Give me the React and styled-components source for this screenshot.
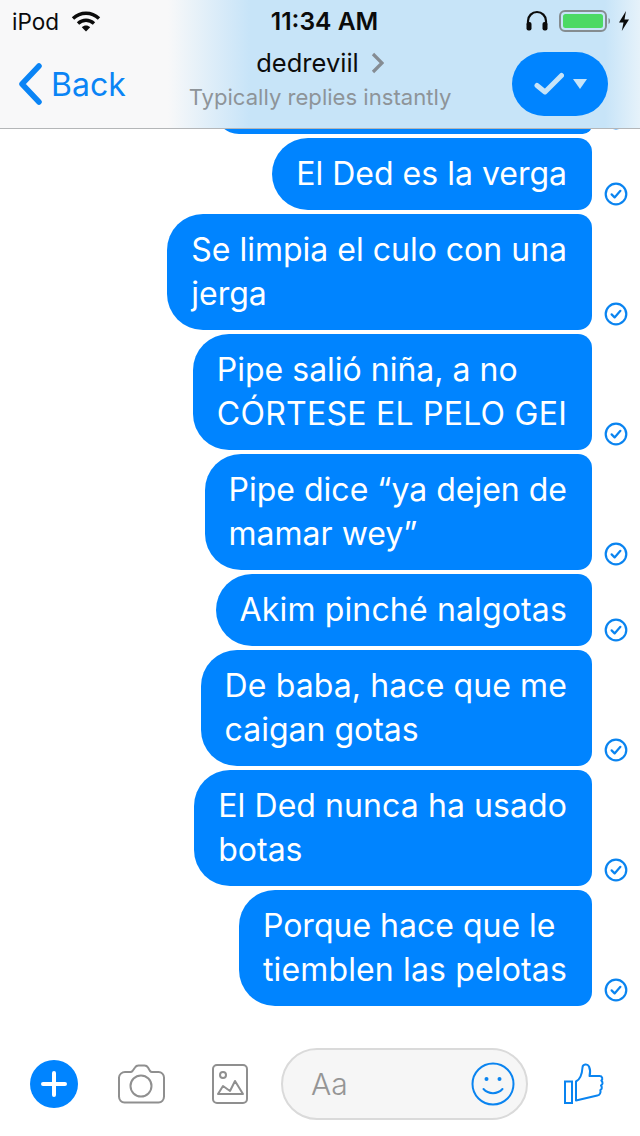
import React from 'react';
import styled, { createGlobalStyle } from 'styled-components';

const Global = createGlobalStyle`
  html, body { margin: 0; padding: 0; background: #fff; }
  body { font-family: Inter, "Noto Sans", "Liberation Sans", sans-serif; }
  * { box-sizing: border-box; }
`;
const Screen = styled.div`
  width: 640px; height: 1136px; display: flex; flex-direction: column; overflow: hidden; background: #fff;
`;
const Header = styled.header`
  height: 129px; flex: none; border-bottom: 1px solid #b4b6b8;
  background: linear-gradient(90deg, #f8f8f9 0, #f8f8f9 168px, #c7e4f8 250px, #c7e4f8 605px, #e6f2fa 640px);
`;
const StatusBar = styled.div`
  height: 42px; display: grid; grid-template-columns: 1fr auto 1fr; align-items: center; padding: 0 10px 0 12px;
  font-size: 22.5px; color: #0b0b0b;
`;
const StatusLeft = styled.div`display: flex; align-items: center; gap: 12px;`;
const StatusRight = styled.div`display: flex; align-items: center; justify-content: flex-end;`;
const Clock = styled.div`font-weight: 600; font-size: 24.6px; margin-left: 7px;`;
const Nav = styled.div`
  height: 86px; display: grid; grid-template-columns: 1fr auto 1fr; align-items: center; padding: 0 18px 2px 18px;
`;
const Back = styled.div`
  display: flex; align-items: center; gap: 9px; color: #0a84f5; font-size: 32px;
`;
const Title = styled.div`
  display: flex; flex-direction: column; align-items: center; margin-top: -10px;
`;
const Name = styled.div`
  display: flex; align-items: center; gap: 12px; font-size: 25.5px; color: #0c0c0c; line-height: 36px;
`;
const Sub = styled.div`font-size: 22.1px; color: #8e9499; line-height: 32px;`;
const Action = styled.div`
  justify-self: end; margin-right: 14px; width: 96px; height: 64px; border-radius: 32px; background: #0084ff;
  display: flex; align-items: center; justify-content: center; gap: 9px;
`;
const Thread = styled.main`
  flex: 1; display: flex; flex-direction: column; gap: 4px; align-items: flex-end; padding-right: 12px; overflow: hidden;
`;
const Row = styled.div`
  display: flex; align-items: flex-end; gap: 12px; flex: none; ${p => p.$clipped && 'height: 5px; overflow: hidden;'}
`;
const Bubble = styled.div`
  background: #0084ff; color: #fff; font-size: 32px; line-height: 44px; padding: 14px 25px 14px 24px;
  border-radius: 36px 14px 14px 36px; white-space: nowrap;
`;
const Line = styled.div`
  letter-spacing: ${p => p.$track || 0}px;
`;
const ClippedBubble = styled.div`
  background: #0084ff; width: 377px; height: 48px; flex: none; border-radius: 36px 14px 14px 36px;
`;
const Composer = styled.footer`
  height: 88px; flex: none; margin-bottom: 8px; display: flex; align-items: center; padding: 0 36px 0 30px;
`;
const Plus = styled.div`
  width: 48px; height: 48px; border-radius: 50%; background: #0084ff; display: flex; align-items: center; justify-content: center; margin-right: 40px; flex: none;
`;
const ToolIcon = styled.svg`flex: none; display: block; margin-right: ${p => p.$gap}px;`;
const InputPill = styled.div`
  width: 247px; height: 72px; border: 2px solid #dadada; border-radius: 36px; background: #f6f6f6; flex: none;
  display: flex; align-items: center; justify-content: space-between; padding: 0 11px 0 28px; margin-right: 35px;
  color: #959595; font-size: 30px; font-weight: 300;
`;
const Icon = styled.svg`display: block; flex: none;`;
const TickBadge = styled(Icon)`margin-bottom: 4px;`;
const BatteryIcon = styled(Icon)`margin: 0 5px 0 10px;`;

const CheckIcon = () => (
  <TickBadge width="24" height="24" viewBox="0 0 24 24">
    <circle cx="12" cy="12" r="10.3" fill="none" stroke="#0a84f0" strokeWidth="2.200" />
    <path d="M7.600 12.400l3 3 5.800-6.600" fill="none" stroke="#0a84f0" strokeWidth="2.200" strokeLinecap="round" strokeLinejoin="round" />
  </TickBadge>
);

const messages = [
  { lines: [['El Ded es la verga']] },
  { lines: [['Se limpia el culo con una'], ['jerga']] },
  { lines: [['Pipe salió niña, a no'], ['CÓRTESE EL PELO GEI', 0.25]] },
  { lines: [['Pipe dice “ya dejen de'], ['mamar wey”']] },
  { lines: [['Akim pinché nalgotas', 0.15]] },
  { lines: [['De baba, hace que me', 0.1], ['caigan gotas']] },
  { lines: [['El Ded nunca ha usado', 0.08], ['botas']] },
  { lines: [['Porque hace que le'], ['tiemblen las pelotas', 0.15]] },
];

export default function App() {
  return (
    <Screen>
      <Global />
      <Header>
        <StatusBar>
          <StatusLeft>
            <span>iPod</span>
            <Icon width="30" height="22" viewBox="0 0 30 22">
              <path d="M2 8.500C9.500 1.500 20.500 1.500 28 8.500" fill="none" stroke="#0b0b0b" strokeWidth="3.400" />
              <path d="M7 13.500c4.800-4.400 11.200-4.400 16 0" fill="none" stroke="#0b0b0b" strokeWidth="3.400" />
              <path d="M10.800 17.200c2.500-2.300 5.900-2.300 8.400 0L15 21.500z" fill="#0b0b0b" />
            </Icon>
          </StatusLeft>
          <Clock>11:34 AM</Clock>
          <StatusRight>
            <Icon width="24" height="22" viewBox="0 0 24 22">
              <path d="M3 15V11a9 9 0 0 1 18 0v4" fill="none" stroke="#0b0b0b" strokeWidth="2.200" />
              <rect x="1.500" y="12" width="5" height="8.500" rx="2" fill="#0b0b0b" />
              <rect x="17.500" y="12" width="5" height="8.500" rx="2" fill="#0b0b0b" />
            </Icon>
            <BatteryIcon width="54" height="24" viewBox="0 0 54 24">
              <rect x="1" y="2" width="46" height="20" rx="5" fill="none" stroke="#858c90" strokeWidth="2" />
              <rect x="4" y="5" width="40" height="14" rx="2.500" fill="#4cd964" />
              <path d="M49.500 9c2 .5 2 5.500 0 6z" fill="#858c90" />
            </BatteryIcon>
            <Icon width="12" height="22" viewBox="0 0 12 22">
              <path d="M8 1L1 12.500h4.500L3.800 21 11 9.500H6.500z" fill="#0b0b0b" />
            </Icon>
          </StatusRight>
        </StatusBar>
        <Nav>
          <Back>
            <Icon width="24" height="42" viewBox="0 0 24 42">
              <path d="M21 3L4 21l17 18" fill="none" stroke="#0a84f5" strokeWidth="5.500" strokeLinecap="round" strokeLinejoin="round" />
            </Icon>
            <span>Back</span>
          </Back>
          <Title>
            <Name>
              <span>dedreviil</span>
              <Icon width="13" height="22" viewBox="0 0 13 22">
                <path d="M2 2l9 9-9 9" fill="none" stroke="#858c93" strokeWidth="3.200" />
              </Icon>
            </Name>
            <Sub>Typically replies instantly</Sub>
          </Title>
          <Action>
            <Icon width="30" height="24" viewBox="0 0 30 24">
              <path d="M3 13.500l8 6.500L27.500 3.500" fill="none" stroke="#c7e4f8" strokeWidth="5" strokeLinecap="round" strokeLinejoin="round" />
            </Icon>
            <Icon width="14" height="10" viewBox="0 0 14 10">
              <path d="M0 0h14L7 10z" fill="#c7e4f8" />
            </Icon>
          </Action>
        </Nav>
      </Header>
      <Thread>
        <Row $clipped>
          <ClippedBubble />
          <CheckIcon />
        </Row>
        {messages.map((m, i) => (
          <Row key={i}>
            <Bubble>
              {m.lines.map(([text, track], j) => <Line key={j} $track={track}>{text}</Line>)}
            </Bubble>
            <CheckIcon />
          </Row>
        ))}
      </Thread>
      <Composer>
        <Plus>
          <Icon width="26" height="26" viewBox="0 0 26 26">
            <path d="M13 2v22M2 13h22" stroke="#fff" strokeWidth="4" strokeLinecap="round" />
          </Icon>
        </Plus>
        <ToolIcon $gap={47} width="47" height="40" viewBox="0 0 47 40">
          <path d="M7 8h5.500c1 0 1.500-.4 2-1l2.500-3.500c.8-1.300 1.800-2 3.500-2h6c1.700 0 2.700.7 3.500 2L32 7c.5.6 1 1 2 1h6.500C43.500 8 46 10.500 46 13.500v19c0 3.500-2.500 6-5.500 6h-34C3.500 38.500 1 36 1 32.500v-19C1 10.500 4 8 7 8z" fill="none" stroke="#8f8f8f" strokeWidth="2" />
          <circle cx="23" cy="22" r="10.500" fill="none" stroke="#8f8f8f" strokeWidth="2" />
        </ToolIcon>
        <ToolIcon $gap={33} width="36" height="40" viewBox="0 0 36 40">
          <rect x="1" y="1" width="34" height="38" rx="4" fill="none" stroke="#8f8f8f" strokeWidth="2" />
          <circle cx="11" cy="11" r="3" fill="none" stroke="#8f8f8f" strokeWidth="2" />
          <path d="M6 30l5-8 7 5 5-10 8 13z" fill="none" stroke="#8f8f8f" strokeWidth="2" strokeLinejoin="round" />
        </ToolIcon>
        <InputPill>
          <span>Aa</span>
          <Icon width="44" height="44" viewBox="0 0 44 44">
            <circle cx="22" cy="22" r="20.500" fill="none" stroke="#0a84f0" strokeWidth="2" />
            <circle cx="15.500" cy="17" r="2" fill="#0a84f0" />
            <circle cx="28.500" cy="17" r="2" fill="#0a84f0" />
            <path d="M12.500 27c5 5.500 14 5.500 19 0" fill="none" stroke="#0a84f0" strokeWidth="2" strokeLinecap="round" />
          </Icon>
        </InputPill>
        <Icon width="42" height="42" viewBox="0 0 42 42">
          <rect x="2" y="18.500" width="7" height="21.500" fill="none" stroke="#0a84f0" strokeWidth="2" />
          <path d="M13 37.500V18.500c4-2 6-6.500 6.500-14 .2-3.500 5-4 6.500-1 1.500 3.500 1.500 6.500.5 9.500h10c3 0 3.500 3.200 1.800 4.500 1.700 1.500 1.700 4-.3 5 1.300 1.500 1 3.700-.7 4.700.8 2.300-.5 5-3 5.300z" fill="none" stroke="#0a84f0" strokeWidth="2" strokeLinejoin="round" />
        </Icon>
      </Composer>
    </Screen>
  );
}
